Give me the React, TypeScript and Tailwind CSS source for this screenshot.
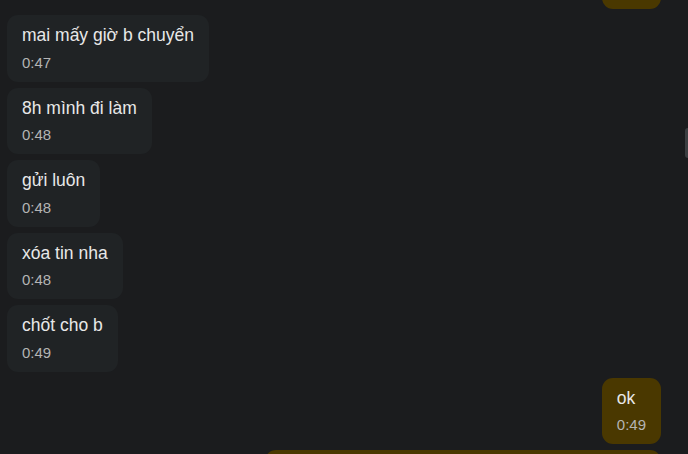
import React from 'react';

type Msg = { id: number; text: string; time: string; mine: boolean };

const messages: Msg[] = [
  { id: 1, text: 'ok', time: '0:46', mine: true },
  { id: 2, text: 'mai mấy giờ b chuyển', time: '0:47', mine: false },
  { id: 3, text: '8h mình đi làm', time: '0:48', mine: false },
  { id: 4, text: 'gửi luôn', time: '0:48', mine: false },
  { id: 5, text: 'xóa tin nha', time: '0:48', mine: false },
  { id: 6, text: 'chốt cho b', time: '0:49', mine: false },
  { id: 7, text: 'ok', time: '0:49', mine: true },
  { id: 8, text: 'mình chuyển rồi nha, b kiểm tra lại giúp mình với nhé', time: '0:50', mine: true },
];

const Bubble = ({ msg }: { msg: Msg }) => (
  <div className={msg.mine ? 'flex justify-end' : 'flex justify-start'}>
    <div
      className={
        'rounded-[11px] px-[15px] pt-[10px] pb-[9px] max-w-[396px] ' +
        (msg.mine ? 'bg-[#4a3800]' : 'bg-[#202325]')
      }
    >
      <p className="text-[17.5px] leading-[20px] text-[#e8e8e8]">{msg.text}</p>
      <p className="mt-[7.5px] text-[15px] leading-[20px] text-[#b4b4b4]">{msg.time}</p>
    </div>
  </div>
);

export default function App() {
  return (
    <div className="relative h-[454px] w-[688px] overflow-hidden bg-[#1b1c1e] font-['Liberation_Sans',Arial,sans-serif]">
      <div className="-mt-[57.5px] flex flex-col gap-[6px] pl-[7px] pr-[27px]">
        {messages.map((m) => (
          <Bubble key={m.id} msg={m} />
        ))}
      </div>
      {/* scrollbar thumb */}
      <div className="absolute right-0 top-[128px] h-[30px] w-[3px] rounded-l-sm bg-[#3c3f42]" />
    </div>
  );
}
